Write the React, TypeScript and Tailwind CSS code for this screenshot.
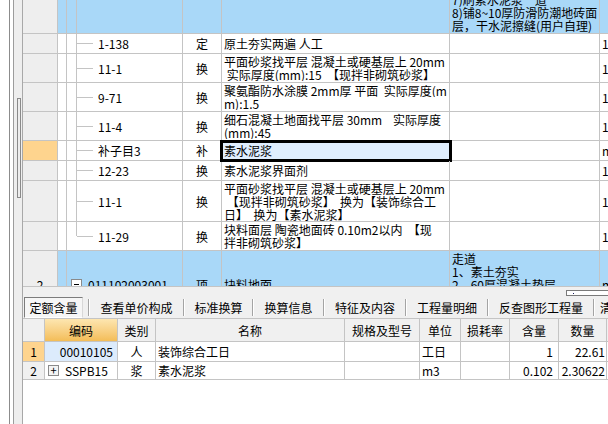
import clsx from "clsx"

const LINE = "border-[#c4c4c4]"

type TreeKind = "pass" | "mid" | "last"

interface TopRow {
  h: string
  head?: string
  headClass?: string
  blue?: boolean
  tree?: TreeKind
  group?: boolean
  code?: string
  kind?: string
  name?: string[]
  feat?: string[]
  featBottom?: boolean
  last?: string
  focus?: boolean
}

const topRows: TopRow[] = [
  {
    h: "h-[34px]",
    blue: true,
    tree: "pass",
    feat: ["7)刷素水泥浆一道", "8)铺8~10厚防滑防潮地砖面", "层，干水泥擦缝(用户自理)"],
    featBottom: true,
  },
  { h: "h-[20px]", tree: "mid", code: "1-138", kind: "定", name: ["原土夯实两遍 人工"], last: "1" },
  {
    h: "h-[29px]",
    tree: "mid",
    code: "11-1",
    kind: "换",
    name: ["平面砂浆找平层 混凝土或硬基层上 20mm", " 实际厚度(mm):15  【现拌非砌筑砂浆】"],
    last: "1",
  },
  {
    h: "h-[29px]",
    tree: "mid",
    code: "9-71",
    kind: "换",
    name: ["聚氨酯防水涂膜 2mm厚 平面  实际厚度(m", "m):1.5"],
    last: "1",
  },
  {
    h: "h-[29px]",
    tree: "mid",
    code: "11-4",
    kind: "换",
    name: ["细石混凝土地面找平层 30mm    实际厚度", "(mm):45"],
    last: "1",
  },
  {
    h: "h-[20px]",
    headClass: "bg-[#fed48e]",
    tree: "mid",
    code: "补子目3",
    kind: "补",
    name: ["素水泥浆"],
    last: "m",
    focus: true,
  },
  { h: "h-[20px]", tree: "mid", code: "12-23", kind: "换", name: ["素水泥浆界面剂"], last: "1" },
  {
    h: "h-[41px]",
    tree: "mid",
    code: "11-1",
    kind: "换",
    name: [
      "平面砂浆找平层 混凝土或硬基层上 20mm",
      " 【现拌非砌筑砂浆】  换为【装饰综合工",
      "日】  换为【素水泥浆】",
    ],
    last: "1",
  },
  {
    h: "h-[29px]",
    tree: "last",
    code: "11-29",
    kind: "换",
    name: ["块料面层 陶瓷地面砖 0.10m2以内  【现", "拌非砌筑砂浆】"],
    last: "1",
  },
  {
    h: "h-[68px]",
    head: "2",
    blue: true,
    group: true,
    code: "011102003001",
    kind: "项",
    name: ["块料地面"],
    feat: ["走道", "1、素土夯实", "2、60厚混凝土垫层", "3、20厚1:3水泥砂浆找平层"],
    last: "m",
  },
]

function Tree({ kind }: { kind: TreeKind }) {
  return (
    <>
      <div className="flex w-[10px] shrink-0 flex-col self-stretch">
        <div className={clsx("flex-1 border-r", LINE)} />
        <div className={clsx("flex-1", kind !== "last" && "border-r", LINE)} />
      </div>
      {kind !== "pass" && <div className={clsx("h-0 w-[16px] shrink-0 border-t", LINE)} />}
    </>
  )
}

function QuotaGrid() {
  return (
    <div className={clsx("h-[287px] shrink-0 overflow-hidden border-b", LINE)}>
      {topRows.map((row, i) => (
        <div
          key={i}
          className={clsx("flex border-b", LINE, row.h, row.blue ? "bg-[#a9d8f8]" : "bg-white")}
        >
          <div
            className={clsx(
              "flex w-[35px] shrink-0 items-center justify-center border-r",
              LINE,
              row.headClass ?? "bg-[#eeeeee]"
            )}
          >
            {row.head}
          </div>
          <div className={clsx("w-[9px] shrink-0 border-r", LINE)} />
          <div className={clsx("flex w-[116px] shrink-0 items-center border-r whitespace-pre", LINE)}>
            {row.tree && <Tree kind={row.tree} />}
            {row.group && (
              <div className="ml-[4px] flex h-[11px] w-[11px] shrink-0 items-center justify-center border border-[#8a8a8a] bg-white">
                <div className="h-px w-[5px] bg-black" />
              </div>
            )}
            {row.code && <span className={row.group ? "ml-[6px]" : "ml-[5px]"}>{row.code}</span>}
          </div>
          <div className={clsx("flex w-[39px] shrink-0 items-center justify-center border-r", LINE)}>
            {row.kind}
          </div>
          <div
            className={clsx(
              "relative flex w-[228px] shrink-0 flex-col justify-center border-r pl-[2px] whitespace-pre",
              LINE
            )}
          >
            {row.focus && (
              <div className="absolute -top-[1px] -right-[3px] -bottom-[2px] -left-[2px] border-[3px] border-black bg-[#e0eefe]" />
            )}
            {row.name?.map((line, j) => (
              <div key={j} className="relative overflow-hidden">
                {line}
              </div>
            ))}
          </div>
          <div
            className={clsx(
              "flex w-[150px] shrink-0 flex-col overflow-hidden border-r pl-[2px] whitespace-pre",
              LINE,
              row.featBottom ? "justify-end pb-[1px]" : "justify-start pt-[1px]"
            )}
          >
            {row.feat?.map((line, j) => (
              <div key={j} className="shrink-0">
                {line}
              </div>
            ))}
          </div>
          <div className="flex flex-1 items-center pl-[2px]">{row.last}</div>
        </div>
      ))}
    </div>
  )
}

function ScrollStrip() {
  return (
    <div className="flex h-[10px] shrink-0 items-start justify-end bg-[#f0f0f0] pt-[3px]">
      <div className="flex h-[6px] w-[42px] items-center border border-r-0 border-[#7a7a7a] bg-white pl-[6px]">
        <div className="h-px w-px bg-[#202060]" />
      </div>
    </div>
  )
}

const tabs = [
  { label: "查看单价构成", w: "w-[93px]" },
  { label: "标准换算", w: "w-[67px]" },
  { label: "换算信息", w: "w-[69px]" },
  { label: "特征及内容", w: "w-[80px]" },
  { label: "工程量明细", w: "w-[80px]" },
  { label: "反查图形工程量", w: "w-[104px]" },
]

function Sep() {
  return (
    <div className="flex h-[17px] shrink-0">
      <div className="w-px bg-[#a4a4a4]" />
      <div className="w-px bg-white" />
    </div>
  )
}

function TabBar() {
  return (
    <div className="flex h-[21px] shrink-0 items-center overflow-hidden bg-[#f0f0f0] whitespace-nowrap">
      <div className="ml-[1px] flex h-[21px] w-[59px] shrink-0 items-center justify-center border border-t-[#7c7c7c] border-r-[#d8d8d8] border-b-white border-l-[#7c7c7c] bg-[#f6f6f6]">
        定额含量
      </div>
      <div className="w-[5px] shrink-0" />
      {tabs.map((t) => (
        <div key={t.label} className="flex shrink-0 items-center">
          <Sep />
          <div className={clsx("flex shrink-0 justify-center", t.w)}>{t.label}</div>
        </div>
      ))}
      <Sep />
      <div className="pl-[5px]">清单工程量</div>
    </div>
  )
}

const cols = [
  { label: "编码", w: "w-[73px]" },
  { label: "类别", w: "w-[38px]" },
  { label: "名称", w: "w-[189px]" },
  { label: "规格及型号", w: "w-[75px]" },
  { label: "单位", w: "w-[41px]" },
  { label: "损耗率", w: "w-[49px]" },
  { label: "含量", w: "w-[49px]" },
  { label: "数量", w: "w-[48px]" },
]

const items = [
  { no: "1", code: "00010105", kind: "人", name: "装饰综合工日", unit: "工日", qty: "1", total: "22.61", active: true },
  { no: "2", code: "SSPB15", kind: "浆", name: "素水泥浆", unit: "m3", qty: "0.102", total: "2.30622", expand: true },
]

function ContentGrid() {
  const cell = clsx("flex shrink-0 items-center border-r", LINE)
  return (
    <div className={clsx("flex-1 border-t bg-white whitespace-nowrap", LINE)}>
      <div className={clsx("flex h-[23px] border-b bg-[#f0f0f0]", LINE)}>
        <div className={clsx(cell, "w-[22px]")} />
        {cols.map((c, i) => (
          <div
            key={c.label}
            className={clsx(
              cell,
              c.w,
              "justify-center",
              i === 0 && "bg-linear-to-b from-[#fde6b0] to-[#f3bd57]"
            )}
          >
            {c.label}
          </div>
        ))}
      </div>
      {items.map((it) => (
        <div key={it.no} className={clsx("flex border-b", LINE, it.active ? "h-[20px]" : "h-[18px]")}>
          <div
            className={clsx(cell, "w-[22px] justify-center", it.active ? "bg-[#fed48e]" : "bg-[#f0f0f0]")}
          >
            {it.no}
          </div>
          <div className={clsx(cell, "w-[73px]", it.active ? "justify-end bg-[#dcebfc] pr-[4px]" : "pl-[3px]")}>
            {it.expand && (
              <div className="mr-[6px] flex h-[11px] w-[11px] items-center justify-center border border-[#8a8a8a] bg-[#f4f4f4] text-[11px] leading-none">
                +
              </div>
            )}
            {it.code}
          </div>
          <div className={clsx(cell, "w-[38px] justify-center")}>{it.kind}</div>
          <div className={clsx(cell, "w-[189px] pl-[2px]")}>{it.name}</div>
          <div className={clsx(cell, "w-[75px]")} />
          <div className={clsx(cell, "w-[41px] pl-[2px]")}>{it.unit}</div>
          <div className={clsx(cell, "w-[49px]")} />
          <div className={clsx(cell, "w-[49px] justify-end pr-[5px]")}>{it.qty}</div>
          <div className={clsx(cell, "w-[48px] justify-end pr-[1px]")}>{it.total}</div>
        </div>
      ))}
    </div>
  )
}

function SideStrip() {
  return (
    <div className="flex w-[22px] shrink-0">
      <div className="w-[9px]" />
      <div className="w-px bg-[#8c8c8c]" />
      <div className="w-[3px]" />
      <div className="w-px bg-[#9c9c9c]" />
      <div className="w-[8px] bg-[#eeeeee] pt-[98px] pl-[3px]">
        <div className="h-[100px] w-[4px] border border-[#8a8a8a]" />
      </div>
    </div>
  )
}

export default function App() {
  return (
    <div className="flex h-[424px] w-[608px] overflow-hidden bg-white font-['Noto_Sans_CJK_SC',sans-serif] text-[12px] leading-[13px] text-black">
      <SideStrip />
      <div className="flex min-w-0 flex-1 flex-col border-l border-[#a8a8a8]">
        <QuotaGrid />
        <ScrollStrip />
        <TabBar />
        <ContentGrid />
      </div>
    </div>
  )
}
